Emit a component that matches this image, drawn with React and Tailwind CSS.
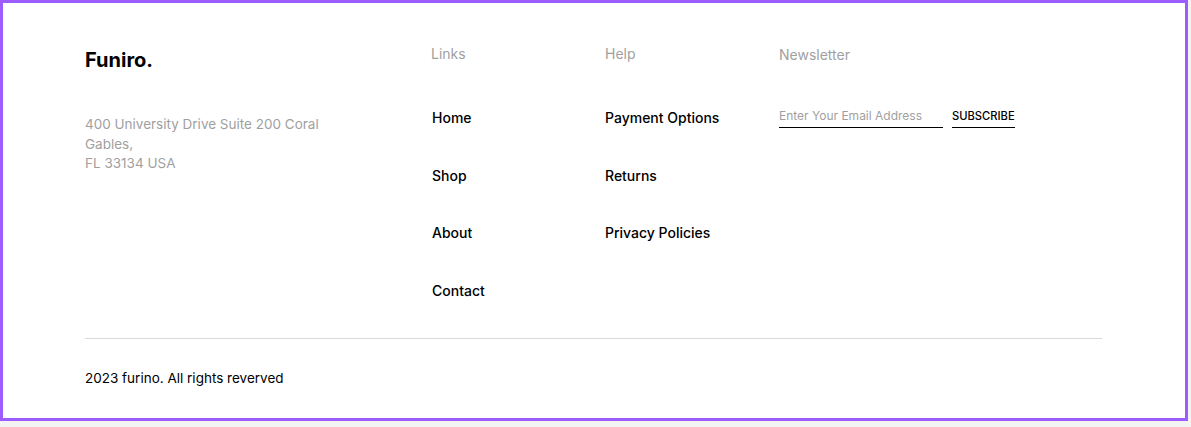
import React from 'react'

const links = ['Home', 'Shop', 'About', 'Contact']
const help = ['Payment Options', 'Returns', 'Privacy Policies']

function App() {
  return (
    <div className="min-h-screen bg-[#f3f3f3]" style={{ fontFamily: 'Inter, sans-serif' }}>
      <footer className="w-[1188px] h-[421px] border-[3px] border-[#9d5cff] bg-white pl-[82px] pt-[41px]">
        <div className="flex items-start">
          <div className="w-[346px]">
            <div className="text-[20px] font-bold leading-[30px] mt-[1px] text-black">Funiro.</div>
            <p className="mt-[40px] w-[245px] text-[13.5px] leading-[19.5px] text-[#9f9f9f]">
              400 University Drive Suite 200 Coral Gables,
              <br />
              FL 33134 USA
            </p>
          </div>

          <div className="w-[174px]">
            <div className="text-[14px] leading-[20px] text-[#9f9f9f]">Links</div>
            <ul className="mt-[44px] pl-px flex flex-col gap-[37.5px]">
              {links.map(l => (
                <li key={l} className="text-[14px] leading-[20px] font-medium text-black">{l}</li>
              ))}
            </ul>
          </div>

          <div className="w-[174px]">
            <div className="text-[14px] leading-[20px] text-[#9f9f9f]">Help</div>
            <ul className="mt-[44px] flex flex-col gap-[37.5px]">
              {help.map(l => (
                <li key={l} className="text-[14px] leading-[20px] font-medium text-black">{l}</li>
              ))}
            </ul>
          </div>

          <div>
            <div className="mt-[1px] text-[14px] leading-[20px] text-[#9f9f9f]">Newsletter</div>
            <div className="mt-[43px] flex items-end gap-[9px]">
              <input
                className="w-[164px] border-b border-black pb-[3px] text-[12px] leading-[16px] outline-none placeholder:text-[#9f9f9f]"
                placeholder="Enter Your Email Address"
              />
              <button className="border-b border-black pb-[3px] text-[11.2px] leading-[16px] font-medium text-black">
                SUBSCRIBE
              </button>
            </div>
          </div>
        </div>

        <div className="mt-[37px] w-[1017px] h-px bg-[#d9d9d9]" />
        <div className="mt-[29px] text-[13.5px] leading-[20px] text-black">2023 furino. All rights reverved</div>
      </footer>
    </div>
  )
}

export default App
